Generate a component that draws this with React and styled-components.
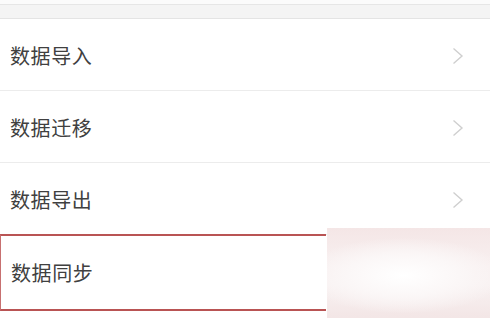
import React from 'react';
import styled, {createGlobalStyle} from 'styled-components';

const Global = createGlobalStyle`
  body {
    margin: 0;
    background: #ffffff;
    font-family: "Noto Sans CJK SC", "Noto Sans", sans-serif;
  }
`;

const items = [
  {label: '数据导入', arrow: true},
  {label: '数据迁移', arrow: true},
  {label: '数据导出', arrow: true},
  {label: '数据同步', arrow: false, marked: true},
];

export default function App() {
  return (
    <Page>
      <Global />
      <TopGap />
      <Band />
      <List>
        {items.map((it) => (
          <Row key={it.label} $marked={it.marked}>
            <Label>{it.label}</Label>
            {it.arrow && (
              <Chevron viewBox="0 0 12 18" width="12" height="18">
                <path d="M1.5 1.5 L10 9 L1.5 16.5" fill="none" stroke="#cfcfcf" strokeWidth="1.4" />
              </Chevron>
            )}
            {it.marked && <Blur />}
          </Row>
        ))}
      </List>
    </Page>
  );
}

const Page = styled.div`
  width: 490px;
  height: 318px;
  overflow: hidden;
  background: #fff;
  display: flex;
  flex-direction: column;
`;

const TopGap = styled.div`
  height: 4px;
  background: #fbfbfb;
  border-bottom: 1px solid #e6e6e6;
`;

const Band = styled.div`
  height: 13px;
  background: #f4f4f4;
  border-bottom: 1px solid #e4e4e4;
`;

const List = styled.div`
  display: flex;
  flex-direction: column;
`;

const Row = styled.div`
  position: relative;
  height: 72px;
  display: flex;
  align-items: center;
  justify-content: space-between;
  padding: 2px 26px 0 10px;
  box-sizing: border-box;
  border-bottom: 1px solid #ececec;
  ${(p) =>
    p.$marked &&
    `
    width: 326px;
    border-top: 2px solid #b95454;
    border-bottom: 2px solid #b95454;
    border-left: 1px solid #c77070;
    height: 77px;
    margin-top: -1px;
    padding-top: 0;
  `}
`;

const Label = styled.span`
  font-size: 20px;
  color: #404040;
  letter-spacing: 0.6px;
`;

const Chevron = styled.svg`
  display: block;
`;

const Blur = styled.div`
  position: absolute;
  left: 326px;
  top: -8px;
  width: 170px;
  height: 95px;
  background:
    radial-gradient(ellipse 60% 40% at 45% 50%, #ffffff 0%, #fbf7f7 55%, rgba(243, 228, 228, 0) 100%),
    linear-gradient(180deg, #f4e6e6 0%, #f8f0f0 40%, #f8f1f1 60%, #f2e4e4 100%);
`;
